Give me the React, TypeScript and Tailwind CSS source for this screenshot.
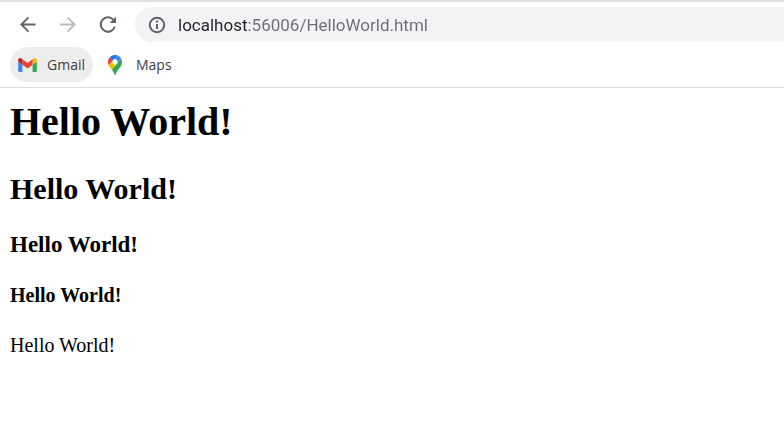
import React from "react";

function BackIcon() {
  return (
    <svg viewBox="0 0 18 18" className="size-[18px]" fill="none" stroke="currentColor" strokeWidth="1.8">
      <path d="M16.5 8.5H2.5M9.5 1.3L2.3 8.5l7.2 7.2" />
    </svg>
  );
}

function ForwardIcon() {
  return (
    <svg viewBox="0 0 18 18" className="size-[18px]" fill="none" stroke="currentColor" strokeWidth="1.8">
      <path d="M1 8.5h14.5M8.5 1.3l7.2 7.2-7.2 7.2" />
    </svg>
  );
}

function ReloadIcon() {
  return (
    <svg viewBox="0 0 18 18" className="size-[18px]" fill="none">
      <path d="M14.2 3.6A7.2 7.2 0 1 0 15.8 10.8" stroke="currentColor" strokeWidth="2" />
      <path d="M17 0.8V7H10.6z" fill="currentColor" />
    </svg>
  );
}

function InfoIcon() {
  return (
    <svg viewBox="0 0 18 18" className="size-[18px]" fill="none">
      <circle cx="9" cy="9" r="7.2" stroke="currentColor" strokeWidth="2" />
      <path d="M9 8v5M9 4.6v2" stroke="currentColor" strokeWidth="2" />
    </svg>
  );
}

function GmailIcon() {
  return (
    <svg viewBox="52 42 88 66" className="h-[14px] w-[19px]">
      <path fill="#4285f4" d="M58 108h14V74L52 59v43c0 3.32 2.69 6 6 6" />
      <path fill="#34a853" d="M120 108h14c3.32 0 6-2.69 6-6V59l-20 15" />
      <path fill="#fbbc04" d="M120 48v26l20-15v-8c0-7.42-8.47-11.65-14.4-7.2" />
      <path fill="#ea4335" d="M72 74V48l24 18 24-18v26L96 92" />
      <path fill="#c5221f" d="M52 51v8l20 15V48l-5.6-4.2c-5.94-4.45-14.4-.22-14.4 7.2" />
    </svg>
  );
}

function MapsIcon() {
  return (
    <svg viewBox="0 0 92.3 132.3" className="h-5 w-[14px]">
      <path fill="#1a73e8" d="M60.2 2.2C55.8.8 51 0 46.1 0 32 0 19.3 6.4 10.8 16.5l21.8 18.3L60.2 2.2z" />
      <path fill="#ea4335" d="M10.8 16.5C4.1 24.5 0 34.9 0 46.1c0 8.7 1.7 15.7 4.6 22l28-33.3-21.8-18.3z" />
      <path fill="#4285f4" d="M46.2 28.5c9.8 0 17.7 7.9 17.7 17.7 0 4.3-1.6 8.3-4.2 11.4 0 0 13.9-16.6 27.5-32.7-5.6-10.8-15.3-19-27-22.7L32.6 34.8c3.3-3.8 8.1-6.3 13.6-6.3" />
      <path fill="#fbbc04" d="M46.2 63.8c-9.8 0-17.7-7.9-17.7-17.7 0-4.3 1.5-8.3 4.1-11.3l-28 33.3c4.8 10.6 12.8 19.2 21 29.9l34.1-40.5c-3.3 3.9-8.1 6.3-13.5 6.3" />
      <path fill="#34a853" d="M59.1 109.2c15.4-24.1 33.3-35 33.3-63 0-7.7-1.9-14.9-5.2-21.3L25.6 98c2.6 3.4 5.3 7.3 7.9 11.3 9.4 14.5 6.8 23.1 12.8 23.1s3.4-8.7 12.8-23.2" />
    </svg>
  );
}

export default function App() {
  return (
    <div className="min-h-screen bg-white">
      <header className="border-t-2 border-b border-t-[#dee1e6] border-b-[#dadce0] font-['Open_Sans','Noto_Sans',sans-serif]">
        <div className="flex items-center gap-[22px] pt-[5px] pl-[19px] text-[#5f6368]">
          <button type="button" aria-label="Back"><BackIcon /></button>
          <button type="button" aria-label="Forward" disabled className="text-[#babcbe]"><ForwardIcon /></button>
          <button type="button" aria-label="Reload"><ReloadIcon /></button>
          <div className="-ml-1 flex h-[35px] min-w-0 flex-1 items-center gap-3 rounded-l-full bg-[#f1f3f4] pl-[13px]">
            <button type="button" aria-label="Site information"><InfoIcon /></button>
            <input
              type="text"
              aria-label="Address"
              defaultValue="localhost:56006/HelloWorld.html"
              className="h-6 min-w-0 flex-1 bg-linear-to-r from-[#202124] from-[69px] to-[#6b6f73] to-[69px] bg-clip-text font-[Roboto,sans-serif] text-[17px] leading-6 text-transparent caret-[#202124] outline-none"
            />
          </div>
        </div>
        <nav aria-label="Bookmarks" className="flex items-center gap-[15px] px-[10px] py-[5px] text-sm text-[#3c4043]">
          <a href="#gmail" className="flex h-[35px] items-center gap-[10px] rounded-full bg-[#ededed] px-2">
            <GmailIcon />
            Gmail
          </a>
          <a href="#maps" className="flex h-[35px] items-center gap-[14px]">
            <MapsIcon />
            Maps
          </a>
        </nav>
      </header>
      <main className="flex flex-col gap-[26px] px-[10px] pt-[11px] font-['Liberation_Serif',serif] text-black">
        <h1 className="text-[40px] leading-[46px] font-bold">Hello World!</h1>
        <h2 className="text-[30px] leading-9 font-bold">Hello World!</h2>
        <h3 className="text-[23px] leading-6 font-bold">Hello World!</h3>
        <h4 className="text-xl leading-6 font-bold">Hello World!</h4>
        <p className="text-xl leading-6">Hello World!</p>
      </main>
    </div>
  );
}
